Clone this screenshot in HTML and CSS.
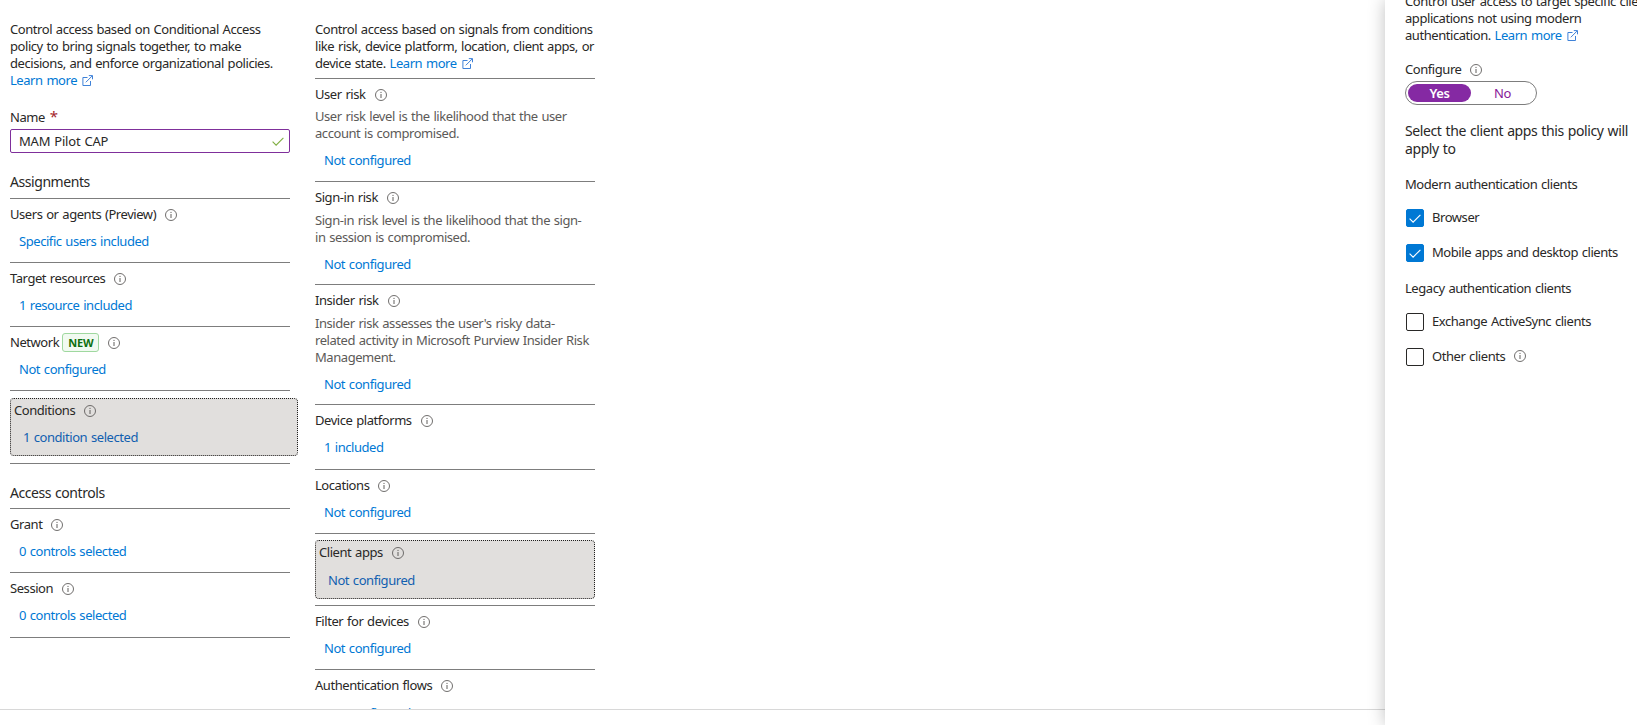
FILE: index.html
```html
<!DOCTYPE html>
<html lang="en">
<head>
    <meta charset="UTF-8">
    <meta name="viewport" content="width=device-width, initial-scale=1.0">
    <title>Conditional Access policy</title>
    <link rel="stylesheet" href="styles.css">
</head>
<body>

<!-- Shared icons -->
<svg class="sprite">
    <symbol id="info" viewBox="0 0 12 12">
        <circle cx="6" cy="6" r="5.5" fill="none" stroke="#605e5c" stroke-width="0.9"/>
        <path d="M6 5v4M6 2.9v1.1" stroke="#605e5c" stroke-width="1" fill="none"/>
    </symbol>
    <symbol id="external" viewBox="0 0 11 11">
        <path d="M5.5 2.5H.9v8h7.6V6M3.8 7.3L10.3 .8M6.8 .6h3.7v3.7" fill="none" stroke="#3f82d8" stroke-width="1"/>
    </symbol>
    <symbol id="check" viewBox="0 0 12 9">
        <path d="M.6 4.6l3.5 3.5L11.4 .8" fill="none" stroke="currentColor" stroke-width="1.1"/>
    </symbol>
</svg>

<div class="page">
    <div class="content">
        <!-- Policy column -->
        <div class="column">
            <p class="intro">Control access based on Conditional Access<br>policy to bring signals together, to make<br>decisions, and enforce organizational policies.<br><a>Learn more<svg class="external"><use href="#external"/></svg></a></p>
            <div class="name-label">Name <span class="required">*</span></div>
            <div class="name-input"><span>MAM Pilot CAP</span><svg class="valid"><use href="#check"/></svg></div>

            <h3>Assignments</h3>
            <div class="item">
                <div class="label">Users or agents (Preview)<svg class="info"><use href="#info"/></svg></div>
                <a class="value">Specific users included</a>
            </div>
            <div class="item">
                <div class="label">Target resources<svg class="info"><use href="#info"/></svg></div>
                <a class="value">1 resource included</a>
            </div>
            <div class="item">
                <div class="label">Network<span class="badge">NEW</span><svg class="info"><use href="#info"/></svg></div>
                <a class="value">Not configured</a>
            </div>
            <div class="item active conditions">
                <div class="box">
                    <div class="label">Conditions<svg class="info"><use href="#info"/></svg></div>
                    <a class="value">1 condition selected</a>
                </div>
            </div>

            <h3>Access controls</h3>
            <div class="item">
                <div class="label">Grant<svg class="info"><use href="#info"/></svg></div>
                <a class="value">0 controls selected</a>
            </div>
            <div class="item tall">
                <div class="label">Session<svg class="info"><use href="#info"/></svg></div>
                <a class="value">0 controls selected</a>
            </div>
        </div>

        <!-- Conditions column -->
        <div class="column">
            <p class="intro ruled">Control access based on signals from conditions<br>like risk, device platform, location, client apps, or<br>device state. <a>Learn more<svg class="external"><use href="#external"/></svg></a></p>
            <div class="item">
                <div class="label">User risk<svg class="info"><use href="#info"/></svg></div>
                <p class="description">User risk level is the likelihood that the user<br>account is compromised.</p>
                <a class="value">Not configured</a>
            </div>
            <div class="item spaced">
                <div class="label">Sign-in risk<svg class="info"><use href="#info"/></svg></div>
                <p class="description">Sign-in risk level is the likelihood that the sign-<br>in session is compromised.</p>
                <a class="value">Not configured</a>
            </div>
            <div class="item spaced">
                <div class="label">Insider risk<svg class="info"><use href="#info"/></svg></div>
                <p class="description">Insider risk assesses the user's risky data-<br>related activity in Microsoft Purview Insider Risk<br>Management.</p>
                <a class="value">Not configured</a>
            </div>
            <div class="item tall">
                <div class="label">Device platforms<svg class="info"><use href="#info"/></svg></div>
                <a class="value">1 included</a>
            </div>
            <div class="item">
                <div class="label">Locations<svg class="info"><use href="#info"/></svg></div>
                <a class="value">Not configured</a>
            </div>
            <div class="item active client-apps">
                <div class="box">
                    <div class="label">Client apps<svg class="info"><use href="#info"/></svg></div>
                    <a class="value">Not configured</a>
                </div>
            </div>
            <div class="item">
                <div class="label">Filter for devices<svg class="info"><use href="#info"/></svg></div>
                <a class="value">Not configured</a>
            </div>
            <div class="item last">
                <div class="label">Authentication flows<svg class="info"><use href="#info"/></svg></div>
                <a class="value">Not configured</a>
            </div>
        </div>
    </div>

    <!-- Client apps panel -->
    <div class="panel">
        <p class="intro">Control user access to target specific client<br>applications not using modern<br>authentication. <a>Learn more<svg class="external"><use href="#external"/></svg></a></p>
        <div class="label configure">Configure<svg class="info"><use href="#info"/></svg></div>
        <div class="toggle">
            <span class="option on">Yes</span>
            <span class="option">No</span>
        </div>
        <p class="lead">Select the client apps this policy will<br>apply to</p>
        <div class="group">Modern authentication clients</div>
        <div class="choice"><span class="checkbox checked"><svg><use href="#check"/></svg></span>Browser</div>
        <div class="choice"><span class="checkbox checked"><svg><use href="#check"/></svg></span>Mobile apps and desktop clients</div>
        <div class="group">Legacy authentication clients</div>
        <div class="choice"><span class="checkbox"></span>Exchange ActiveSync clients</div>
        <div class="choice"><span class="checkbox"></span>Other clients<svg class="info"><use href="#info"/></svg></div>
    </div>
</div>

</body>
</html>
```

FILE: styles.css
```css
* {
    box-sizing: border-box;
}
body {
    margin: 0;
    overflow: hidden;
    font-family: "Noto Sans", "Open Sans", sans-serif;
    font-size: 13px;
    line-height: 17px;
    letter-spacing: -0.44px;
    word-spacing: 0.8px;
    color: #292827;
    background-color: #fff;
    white-space: nowrap;
}
p, h3 {
    margin: 0;
}
a {
    color: #0078d4;
}
.sprite {
    display: none;
}
.page {
    display: flex;
    justify-content: space-between;
    height: 725px;
}
.content {
    display: flex;
    gap: 25px;
    flex: 1;
    height: 710px;
    padding: 21px 10px 0;
    overflow: hidden;
    border-bottom: 1px solid #d8d8d8;
}
.column {
    width: 280px;
}
.external {
    width: 11px;
    height: 11px;
    margin-left: 5px;
    vertical-align: -1px;
}
.ruled {
    padding-bottom: 6px;
    border-bottom: 1px solid #7d7d7d;
}

/* Name field */
.name-label {
    height: 17px;
    margin-top: 19px;
}
.required {
    margin-left: 1px;
    color: #a4262c;
    font-size: 15px;
}
.name-input {
    display: flex;
    align-items: center;
    justify-content: space-between;
    height: 24px;
    margin-top: 4px;
    padding: 0 5px 0 8px;
    border: 1px solid #7f2f9b;
    border-radius: 2px;
    letter-spacing: -0.2px;
}
.valid {
    width: 12px;
    height: 9px;
    color: #7fae42;
}

h3 {
    margin-top: 20px;
    padding-bottom: 7px;
    border-bottom: 1px solid #7d7d7d;
    font-size: 14px;
    font-weight: normal;
    line-height: 18px;
}
.conditions + h3 {
    padding-bottom: 6px;
}

/* Setting rows */
.item {
    padding: 7px 0 12px;
    border-bottom: 1px solid #7d7d7d;
}
.item.tall {
    padding-bottom: 13px;
}
.item.spaced {
    padding-bottom: 11px;
}
.label {
    display: flex;
    align-items: center;
    height: 17px;
}
.info {
    width: 12px;
    height: 12px;
    margin-left: 9px;
}
.value {
    display: block;
    margin: 10px 0 0 9px;
}
.last .value {
    margin-top: 11px;
}
.description {
    margin-top: 5px;
    color: #5c5a58;
}
.spaced .description {
    margin-top: 6px;
}
.badge {
    height: 19px;
    margin-left: 3px;
    padding: 0 5px;
    border: 1px solid #9fd89f;
    border-radius: 3px;
    background-color: #f1faf1;
    color: #0e700e;
    font-size: 11px;
    font-weight: bold;
    letter-spacing: -0.2px;
}

/* Selected row */
.box {
    height: 58px;
    padding: 3px;
    border: 1px dotted #201f1e;
    border-radius: 4px;
    background-color: #e1dfdd;
}
.box .value {
    color: #1160b0;
}
.item.conditions {
    padding: 7px 0;
}
.conditions .box {
    width: 288px;
}
.item.client-apps {
    padding: 6px 0;
}
.client-apps .box {
    height: 59px;
}
.client-apps .value {
    margin-top: 11px;
}

/* Side panel */
.panel {
    width: 252px;
    padding-left: 20px;
    box-shadow: 0 0 16px rgba(0, 0, 0, 0.25);
}
.panel .intro {
    margin-top: -7px;
}
.configure {
    margin-top: 17px;
}
.toggle {
    display: flex;
    width: 132px;
    height: 24px;
    margin-top: 3px;
    padding: 2px;
    border: 1px solid #7d7d7d;
    border-radius: 12px;
}
.option {
    flex: 1;
    border-radius: 9px;
    color: #881798;
    text-align: center;
    line-height: 18px;
}
.option.on {
    background-color: #8529a3;
    color: #fff;
    font-weight: 600;
}
.lead {
    margin-top: 17px;
    font-size: 14px;
    line-height: 18px;
    letter-spacing: -0.4px;
}
.group {
    margin-top: 18px;
}
.choice {
    display: flex;
    align-items: flex-start;
    height: 18px;
    margin: 17px 0 0 1px;
}
.group + .choice {
    margin-top: 16px;
}
.choice .info {
    margin-top: 2px;
}
.checkbox {
    display: flex;
    align-items: center;
    justify-content: center;
    width: 18px;
    height: 18px;
    margin-right: 8px;
    border: 1px solid #292827;
    border-radius: 2px;
}
.checkbox.checked {
    border-color: #0078d4;
    background-color: #0078d4;
    color: #fff;
}
.checkbox svg {
    width: 12px;
    height: 9px;
}
```
